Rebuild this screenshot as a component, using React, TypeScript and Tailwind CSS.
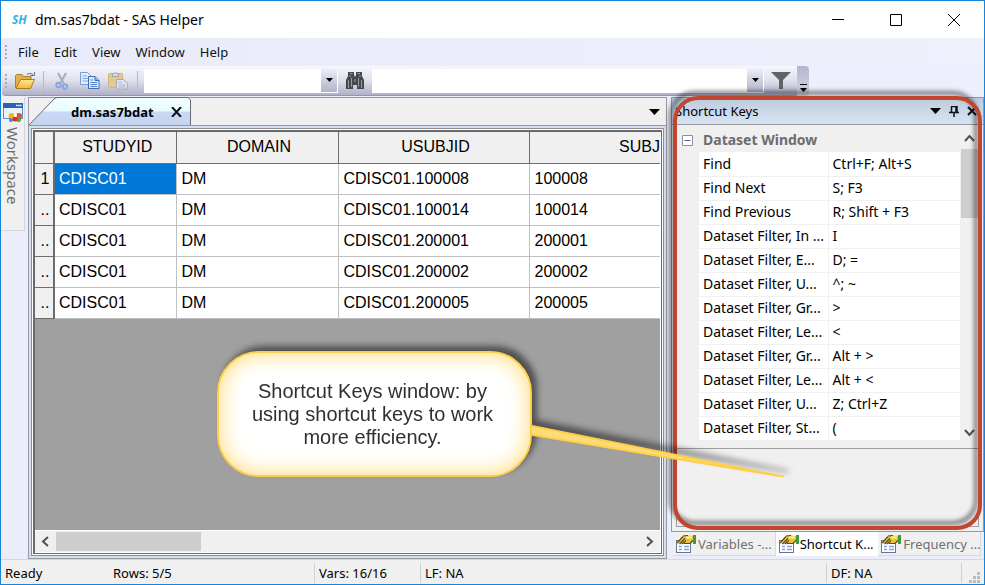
import React from "react";

const columns = ["STUDYID", "DOMAIN", "USUBJID"];
const rows = ["100008", "100014", "200001", "200002", "200005"];

const shortcuts: [string, string][] = [
  ["Find", "Ctrl+F; Alt+S"],
  ["Find Next", "S; F3"],
  ["Find Previous", "R; Shift + F3"],
  ["Dataset Filter, In ...", "I"],
  ["Dataset Filter, E...", "D; ="],
  ["Dataset Filter, U...", "^; ~"],
  ["Dataset Filter, Gr...", ">"],
  ["Dataset Filter, Le...", "<"],
  ["Dataset Filter, Gr...", "Alt + >"],
  ["Dataset Filter, Le...", "Alt + <"],
  ["Dataset Filter, U...", "Z; Ctrl+Z"],
  ["Dataset Filter, St...", "("],
];

function Caret({ className = "" }: { className?: string }) {
  return (
    <svg className={className} width="11" height="6" viewBox="0 0 11 6" aria-hidden="true">
      <path d="M0 0H11L5.500 6Z" fill="#000" />
    </svg>
  );
}

function Chevron({ d }: { d: string }) {
  return (
    <svg width="11" height="11" viewBox="0 0 11 11" fill="none" stroke="#505050" strokeWidth="2" aria-hidden="true">
      <path d={d} />
    </svg>
  );
}

function Grip() {
  return (
    <svg width="2" height="14" viewBox="0 0 2 14" className="shrink-0" aria-hidden="true">
      <path d="M0 0h2v2h-2zM0 4h2v2h-2zM0 8h2v2h-2zM0 12h2v2h-2z" fill="#a9a9b8" />
    </svg>
  );
}

function FolderIcon() {
  return (
    <svg width="21" height="18" viewBox="0 0 21 18" aria-hidden="true">
      <defs>
        <linearGradient id="folder" x1="0" y1="0" x2="0" y2="1">
          <stop offset="0" stopColor="#ffe596" />
          <stop offset="1" stopColor="#f3b93b" />
        </linearGradient>
      </defs>
      <path d="M.5 16V3.500L1.500 2.500H7L8.500 4.500H16V8" fill="#e3b04a" stroke="#a98337" />
      <path d="M1 16.500L5.500 7.500H19.500L15.500 16.500Z" fill="url(#folder)" stroke="#a87a22" />
      <path d="M12 2.500Q15 0 18 2.500M19.500 0v3.500h-4" fill="none" stroke="#5d7390" />
    </svg>
  );
}

function CutIcon() {
  return (
    <svg width="14" height="18" viewBox="0 0 14 18" fill="none" aria-hidden="true">
      <path d="M3 1L8.500 11M11 1L5.500 11" stroke="#a3afc1" strokeWidth="2" />
      <ellipse cx="3.500" cy="13" rx="2.200" ry="2.200" stroke="#8aa5da" strokeWidth="2" />
      <ellipse cx="10" cy="14.500" rx="2.200" ry="2.200" stroke="#8aa5da" strokeWidth="2" />
    </svg>
  );
}

function CopyIcon() {
  return (
    <svg width="20" height="17" viewBox="0 0 20 17" aria-hidden="true">
      <path d="M.5.5H7.500L11 4V12.500H.5Z" fill="#e4eefb" stroke="#7a9ccf" />
      <path d="M2.500 4H7M2.500 6.500H8M2.500 9H8" stroke="#7fa5de" />
      <path d="M8.500 4.500H15L19 8.500V16.500H8.500Z" fill="#d9e8fc" stroke="#3f6cb4" />
      <path d="M15 4.500V8.500H19" fill="#8db2ea" stroke="#3f6cb4" />
      <path d="M10.500 8H13M10.500 10.500H17M10.500 12.500H17M10.500 14.500H17" stroke="#5988d0" />
    </svg>
  );
}

function PasteIcon() {
  return (
    <svg width="21" height="18" viewBox="0 0 21 18" aria-hidden="true">
      <rect x=".5" y="1.500" width="14" height="14" rx="1" fill="#e3c88f" stroke="#ccb483" />
      <path d="M4.500 4.500V1.500H6L7.500.5L9 1.500H10.500V4.500Z" fill="#d9dbe0" stroke="#a0a3ad" />
      <path d="M8.500 7.500H15.500L19.500 11.500V17H8.500Z" fill="#dfe2ea" stroke="#a5abb9" />
      <path d="M10.500 10.500H14M10.500 13H17.500M10.500 15H17.500" stroke="#a9b3c7" />
    </svg>
  );
}

function BinocularsIcon() {
  return (
    <svg width="20" height="18" viewBox="0 0 20 18" aria-hidden="true">
      <path d="M3 0H9V3L10 5L11 3V0H17V4L19 8V17H12V13H8V17H1V8L3 4Z" fill="#48484c" />
      <path d="M5 1.500H7.500M12.500 1.500H15M3.500 8V16M6.500 6V15M13.500 6V15M16.500 8V16M5 3V5M15 3V5M10 7V10" stroke="#9b9ba6" />
    </svg>
  );
}

function WorkspaceIcon() {
  return (
    <svg width="20" height="20" viewBox="0 0 20 20" aria-hidden="true">
      <rect x=".5" y=".5" width="19" height="15" fill="#e9f3fd" stroke="#5f8fc9" />
      <path d="M0 0H20V5H0Z" fill="#2b62b8" />
      <path d="M13 2.500h1.500M15 2.500h1.500M17 2.500h1.500" stroke="#fff" strokeWidth="1.500" />
      <circle cx="8.500" cy="13" r="3" fill="#f7b51c" />
      <circle cx="16" cy="13" r="3" fill="#e8482e" />
      <circle cx="15.500" cy="16.500" r="2.500" fill="#56a637" />
      <circle cx="8" cy="17" r="2" fill="#4a86dc" />
      <circle cx="12" cy="16" r="2.500" fill="#d93023" />
      <circle cx="12.500" cy="12.500" r="1.500" fill="#fff" />
    </svg>
  );
}

function PropertiesIcon() {
  return (
    <svg width="20" height="18" viewBox="0 0 20 18" className="shrink-0" aria-hidden="true">
      <rect x=".5" y="5.500" width="14" height="12" fill="#fff" stroke="#66768f" />
      <path d="M3 11.500H6M8 11.500H13M3 14.500H6M8 14.500H13" stroke="#7fa0e0" strokeWidth="1.500" />
      <path d="M1 8L7 1.500L11 .5L17 1V6L14 8.500H8L5 9Z" fill="#e6c33e" />
      <path d="M1 8L7 1.500M3.500 9L9 3.500M6 9L10 5.500M8 8.500H14L17 5.500M7 1L12 .5" fill="none" stroke="#5a4a1e" strokeWidth="1.200" />
      <path d="M10 2.500H16" stroke="#fff08e" strokeWidth="2" />
      <path d="M17 0H20V9H17Z" fill="#3f9a45" />
    </svg>
  );
}

function Combo({ label, className }: { label: string; className: string }) {
  return (
    <div className={`flex h-6 items-stretch border-b border-white bg-white ${className}`}>
      <input aria-label={label} className="min-w-0 flex-1 bg-white px-1 outline-none" />
      <button aria-label={`${label} history`} className="mr-px flex w-4 items-center justify-center bg-linear-to-b from-[#eceef8] to-[#b2b3c9]">
        <svg width="7" height="4" viewBox="0 0 7 4" aria-hidden="true"><path d="M0 0H7L3.500 4Z" fill="#000" /></svg>
      </button>
    </div>
  );
}

function TitleBar() {
  return (
    <header className="flex h-[37px] shrink-0 items-center bg-white pl-[11px] text-black">
      <span className="w-[23px] font-['Open_Sans',sans-serif] text-xs font-bold italic text-[#2bb4e4]">SH</span>
      <h1 className="flex-1 text-sm">dm.sas7bdat - SAS Helper</h1>
      <div className="flex items-center gap-[46px] pr-6">
        <button aria-label="Minimize"><svg width="12" height="12" viewBox="0 0 12 12"><path d="M0 5.500H12" stroke="#000" /></svg></button>
        <button aria-label="Maximize"><svg width="12" height="12" viewBox="0 0 12 12"><path d="M.5.5H11.500V11.500H.5Z" fill="none" stroke="#000" /></svg></button>
        <button aria-label="Close"><svg width="12" height="12" viewBox="0 0 12 12"><path d="M0 0L12 12M12 0L0 12" stroke="#000" /></svg></button>
      </div>
    </header>
  );
}

function MenuBar() {
  return (
    <nav className="flex h-7 shrink-0 items-center bg-linear-to-r from-[#e9ebfa] to-[#eef0fc] pl-1">
      <Grip />
      <div className="flex gap-[15px] pl-[11px]">
        {["File", "Edit", "View", "Window", "Help"].map((m) => (
          <button key={m}>{m}</button>
        ))}
      </div>
    </nav>
  );
}

function ToolBar() {
  return (
    <div className="flex h-[30px] shrink-0 bg-[#edeffc] pr-[175px]">
      <div className="ml-px flex min-w-0 flex-1 items-center rounded-l border-b border-[#9797ac] bg-linear-to-b from-[#f6f8fd] via-[#dfe0ec] to-[#b0b0c8] pl-[3px]">
        <Grip />
        <button aria-label="Open" className="ml-2"><FolderIcon /></button>
        <span className="ml-[7px] h-5 w-px bg-[#b9bac8]" />
        <button aria-label="Cut" className="ml-[11px]"><CutIcon /></button>
        <button aria-label="Copy" className="ml-[11px]"><CopyIcon /></button>
        <button aria-label="Paste" className="ml-2"><PasteIcon /></button>
        <span className="ml-2 h-5 w-px bg-[#b9bac8]" />
        <Combo label="Find" className="ml-[6px] w-[194px] shrink-0" />
        <button aria-label="Find" className="flex w-[34px] shrink-0 justify-center"><BinocularsIcon /></button>
        <Combo label="Filter" className="min-w-0 flex-1" />
        <button aria-label="Filter" className="flex w-[33px] shrink-0 justify-center">
          <svg width="20" height="17" viewBox="0 0 20 17" aria-hidden="true"><path d="M0 0H20L12 8V17H8V8Z" fill="#636366" /></svg>
        </button>
      </div>
      <button aria-label="Toolbar options" className="flex w-3 items-end justify-center rounded-r bg-linear-to-b from-[#b4b5cd] to-[#d5d7e6] pb-1">
        <svg width="7" height="8" viewBox="0 0 7 8" aria-hidden="true"><path d="M0 .5H7" stroke="#000" /><path d="M0 4H7L3.500 8Z" fill="#000" /></svg>
      </button>
    </div>
  );
}

function DatasetTable() {
  return (
    <table className="w-full table-fixed border-collapse font-['Liberation_Sans',Arial,sans-serif] text-base leading-5 text-black">
      <colgroup>
        <col className="w-[19px]" />
        <col className="w-[122px]" />
        <col className="w-[162px]" />
        <col className="w-[191px]" />
        <col />
      </colgroup>
      <thead>
        <tr className="h-[31px] bg-[#f0f0f0]">
          <th className="border-r-2 border-b border-[#6d6d6d]" aria-label="Row" />
          {columns.map((c) => (
            <th key={c} scope="col" className="border-r border-b border-[#6d6d6d] p-0 pl-1 text-center font-normal">{c}</th>
          ))}
          <th scope="col" className="border-b border-[#6d6d6d] p-0 text-right font-normal">SUBJ</th>
        </tr>
      </thead>
      <tbody>
        {rows.map((id, i) => (
          <tr key={id} className="h-[31px] bg-white">
            <th scope="row" className="border-r-2 border-b border-[#6d6d6d] bg-[#f0f0f0] p-0 pl-0.5 text-center font-normal">{i === 0 ? "1" : ".."}</th>
            <td className={i === 0 ? "border-r border-b border-[#c0c0c0] bg-[#0078d7] bg-clip-padding p-0 pl-1 text-white" : "border-r border-b border-[#c0c0c0] p-0 pl-1"}>CDISC01</td>
            <td className="border-r border-b border-[#c0c0c0] p-0 pl-[5px]">DM</td>
            <td className="border-r border-b border-[#c0c0c0] p-0 pl-[5px]">CDISC01.{id}</td>
            <td className="border-b border-[#c0c0c0] p-0 pl-[5px]">{id}</td>
          </tr>
        ))}
      </tbody>
    </table>
  );
}

function DocumentArea() {
  return (
    <main className="flex min-w-0 flex-1 flex-col border border-[#98989f] bg-[#d5e1f2]">
      <div className="flex h-7 shrink-0 items-end border-b border-[#98989f] bg-[#f0f0f0]">
        <div className="relative h-7 w-[162px]">
          <svg width="162" height="28" viewBox="0 0 162 28" className="absolute inset-0" aria-hidden="true">
            <defs>
              <linearGradient id="tab" x1="0" y1="0" x2="0" y2="1">
                <stop offset="0" stopColor="#f2ffff" />
                <stop offset=".5" stopColor="#e8fbff" />
                <stop offset=".52" stopColor="#c8d8f5" />
                <stop offset="1" stopColor="#c5d5f0" />
              </linearGradient>
            </defs>
            <path d="M0 28L25 2Q27 .5 29 .5H159L161.500 3V28" fill="url(#tab)" stroke="#6a6a72" />
          </svg>
          <div className="relative flex h-7 items-center pt-0.5 pl-[42px] text-black">
            <span className="text-[13px] font-bold">dm.sas7bdat</span>
            <button aria-label="Close tab" className="ml-auto pr-[9px]">
              <svg width="11" height="10" viewBox="0 0 11 10" aria-hidden="true"><path d="M1 0L10 10M10 0L1 10" stroke="#111" strokeWidth="2" /></svg>
            </button>
          </div>
        </div>
        <button aria-label="Open documents" className="mr-1.5 mb-[10px] ml-auto"><Caret className="block" /></button>
      </div>
      <div className="m-0.5 flex min-h-0 flex-1 border border-[#8c8c94] bg-white p-px">
        <div className="flex min-w-0 flex-1 border border-t-2 border-l-2 border-[#6a6a6a] bg-white pr-px pb-px">
          <div className="flex min-w-0 flex-1 flex-col overflow-hidden bg-[#a0a0a0]">
            <div className="min-h-0 flex-1 overflow-hidden">
              <DatasetTable />
            </div>
            <div className="flex h-[22px] shrink-0 items-center border-t border-white bg-[#f0f0f0]">
              <button aria-label="Scroll left" className="flex w-[21px] justify-center"><Chevron d="M8 1L3 5.500L8 10" /></button>
              <span className="h-[19px] w-[145px] bg-[#cdcdcd]" />
              <button aria-label="Scroll right" className="ml-auto flex w-[21px] justify-center"><Chevron d="M3 1L8 5.500L3 10" /></button>
            </div>
          </div>
        </div>
      </div>
    </main>
  );
}

function ToolTabs() {
  return (
    <div className="grid h-[27px] shrink-0 grid-cols-3 pr-[3px] pb-[3px] pl-0.5">
      {["Variables -...", "Shortcut K...", "Frequency ..."].map((t) => (
        <button
          key={t}
          className={
            t.startsWith("Shortcut")
              ? "flex min-w-0 items-center gap-px overflow-hidden whitespace-nowrap bg-white pl-[3px] text-black"
              : "flex min-w-0 items-center gap-0.5 overflow-hidden whitespace-nowrap border-r border-b border-[#d8d8de] bg-[#f0f0f0] pl-[3px] text-[#707070]"
          }
        >
          <PropertiesIcon />
          {t}
        </button>
      ))}
    </div>
  );
}

function ShortcutPanel() {
  return (
    <aside className="relative flex w-[313px] shrink-0 flex-col">
      <section className="flex min-h-0 flex-1 flex-col border border-[#98989f]">
        <div className="flex h-[27px] shrink-0 items-center border-b border-[#98989f] bg-linear-to-b from-[#bccbdb] to-[#d8e4f2] pr-1.5 pl-[3px] text-black">
          <h2 className="flex-1">Shortcut Keys</h2>
          <button aria-label="Window position" className="mr-2"><Caret /></button>
          <button aria-label="Auto hide" className="mr-2">
            <svg width="10" height="11" viewBox="0 0 10 11" aria-hidden="true"><path d="M2 .5H8M2.500 0V6M7 0V6M8 0V6M0 6.500H10M5 7V11" fill="none" stroke="#111" strokeWidth="1.500" /></svg>
          </button>
          <button aria-label="Close panel">
            <svg width="10" height="10" viewBox="0 0 10 10" aria-hidden="true"><path d="M1 1L9 9M9 1L1 9" stroke="#111" strokeWidth="2" /></svg>
          </button>
        </div>
        <div className="flex min-h-0 flex-1 flex-col bg-[#f0f0f0] px-1 pt-[3px] pb-1">
          <div className="flex h-[315px] shrink-0">
            <div className="min-w-0 flex-1">
              <div className="flex h-6 items-center gap-[10px] pl-[6px]">
                <button aria-label="Collapse Dataset Window">
                  <svg width="11" height="11" viewBox="0 0 11 11" aria-hidden="true"><path d="M.5.5H10.500V10.500H.5Z" fill="#fff" stroke="#919191" /><path d="M2.500 5.500H8.500" stroke="#4b63a7" /></svg>
                </button>
                <h3 className="text-sm font-bold text-[#6d6d6d]">Dataset Window</h3>
              </div>
              <div className="pl-[23px]">
                <table className="w-full table-fixed border-collapse text-sm text-black">
                  <tbody>
                    {shortcuts.map(([name, key], i) => (
                      <tr key={i} className="h-6 border-b border-[#f0f0f0] bg-white">
                        <th scope="row" className="w-[129px] border-r border-[#f0f0f0] p-0 pl-1 text-left font-normal whitespace-nowrap">{name}</th>
                        <td className="p-0 pl-1 whitespace-nowrap">{key}</td>
                      </tr>
                    ))}
                  </tbody>
                </table>
              </div>
            </div>
            <div className="flex w-[19px] shrink-0 flex-col items-center">
              <button aria-label="Scroll up" className="flex h-[21px] items-center"><Chevron d="M1 8L5.500 3L10 8" /></button>
              <span className="h-[69px] w-[17px] bg-[#cdcdcd]" />
              <button aria-label="Scroll down" className="mt-auto flex h-[21px] items-center"><Chevron d="M1 3L5.500 8L10 3" /></button>
            </div>
          </div>
          <div className="mt-[5px] flex-1 border border-[#a0a0a0]" />
        </div>
      </section>
      <ToolTabs />
      <div className="pointer-events-none absolute -top-px right-[2px] bottom-[29px] left-[2px] rounded-[25px] border-4 border-[#c1452f] drop-shadow-[-4px_-5px_2px_rgba(0,0,0,0.5)]" />
    </aside>
  );
}

function Callout() {
  return (
    <div className="pointer-events-none absolute top-[350px] left-[216px] h-[126px] w-[570px] drop-shadow-[5px_-5px_3px_rgba(0,0,0,0.5)]">
      <svg width="570" height="126" viewBox="0 0 570 126" className="absolute inset-0" aria-hidden="true">
        <path d="M310 74L566 125.500L310 83Z" fill="#ffdc78" stroke="#ffcf48" strokeWidth="2" strokeLinejoin="round" />
      </svg>
      <div className="relative flex h-[126px] w-[315px] items-center justify-center rounded-[42px] border-2 border-[#fdcf4c] bg-white pr-1 text-center font-['Liberation_Sans',Arial,sans-serif] text-xl leading-[23px] text-[#303030] shadow-[inset_0_0_22px_#ffd96c]">
        <p>Shortcut Keys window: by<br />using shortcut keys to work<br />more efficiency.</p>
      </div>
    </div>
  );
}

function StatusBar() {
  return (
    <footer className="flex h-[25px] shrink-0 items-center border-t border-[#d7d7d7] bg-[#f0f0f0] pt-0.5 text-black">
      <span className="w-[108px] pl-1">Ready</span>
      <span className="w-[205px] pl-1">Rows: 5/5</span>
      <span className="w-[106px] border-l border-[#d0d0d0] pl-1">Vars: 16/16</span>
      <span className="flex-1 border-l border-[#d0d0d0] pl-1">LF: NA</span>
      <span className="w-[135px] border-l border-[#d0d0d0] pl-1">DF: NA</span>
      <span className="flex h-5 w-[23px] items-end justify-end border-l border-[#d0d0d0] pr-1">
        <svg width="11" height="11" viewBox="0 0 11 11" aria-hidden="true"><path d="M8 0h3v3h-3zM4 4h3v3h-3zM8 4h3v3h-3zM0 8h3v3h-3zM4 8h3v3h-3zM8 8h3v3h-3z" fill="#bcbcbc" /></svg>
      </span>
    </footer>
  );
}

export default function App() {
  return (
    <div className="relative flex h-screen flex-col overflow-hidden border border-[#1883d7] bg-[#ebedfb] font-['Noto_Sans',sans-serif] text-[13px] leading-5 text-[#111]">
      <TitleBar />
      <MenuBar />
      <ToolBar />
      <div className="flex min-h-0 flex-1 pt-px">
        <div className="w-[27px] shrink-0">
          <button className="flex h-[134px] w-6 flex-col items-center gap-1 border-r border-b border-[#d4d4dc] bg-[#f0f0f0] pt-1.5 text-[#6d6d6d]">
            <WorkspaceIcon />
            <span className="text-[15px] [writing-mode:vertical-rl]">Workspace</span>
          </button>
        </div>
        <DocumentArea />
        <div className="w-1 shrink-0" />
        <ShortcutPanel />
      </div>
      <StatusBar />
      <Callout />
    </div>
  );
}
